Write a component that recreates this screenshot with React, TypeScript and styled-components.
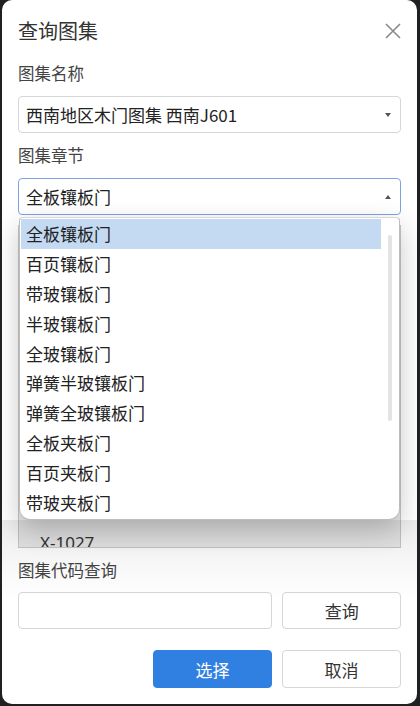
import { createGlobalStyle, styled } from "styled-components";

const GlobalStyle = createGlobalStyle`
	html, body {
		margin: 0;
		padding: 0;
		background: #1f2022;
	}
	body {
		font-family: "Noto Sans CJK SC", "Microsoft YaHei", "Noto Sans", sans-serif;
		color: #333;
	}
`;

const Dialog = styled.div`
	position: relative;
	box-sizing: border-box;
	width: 415px;
	height: 704px;
	margin-left: 2px;
	background: #fff;
	border-radius: 10px;
	padding: 0 16px;
	display: flex;
	flex-direction: column;
	overflow: hidden;
`;

const Header = styled.div`
	display: flex;
	align-items: center;
	justify-content: space-between;
	height: 30px;
	margin-top: 16px;
`;

const Title = styled.div`
	font-size: 20px;
	line-height: 30px;
	color: #333;
`;

const CloseButton = styled.button`
	border: none;
	background: none;
	padding: 0;
	margin-right: -4px;
	width: 24px;
	height: 24px;
	display: flex;
	align-items: center;
	justify-content: center;
`;

const Label = styled.div<{ $top: number }>`
	font-size: 16.5px;
	color: #444;
	line-height: 20px;
	margin-top: ${(p) => p.$top}px;
`;

const SelectWrap = styled.div`
	position: relative;
	margin-top: 13px;
`;

const SelectBox = styled.div<{ $open?: boolean }>`
	box-sizing: border-box;
	height: 37px;
	border: 1px solid ${(p) => (p.$open ? "#7da2e6" : "#d6d6d6")};
	border-radius: 4px;
	display: flex;
	align-items: center;
	justify-content: space-between;
	padding: 0 9px 0 7px;
	font-size: 17px;
	color: #222;
`;

const Caret = styled.span<{ $up?: boolean }>`
	width: 0;
	height: 0;
	border-left: 3.5px solid transparent;
	border-right: 3.5px solid transparent;
	${(p) =>
		p.$up ? "border-bottom: 4px solid #555;" : "border-top: 4px solid #555;"}
`;

const Menu = styled.div`
	position: absolute;
	z-index: 2;
	left: 1px;
	right: 1px;
	top: 39px;
	height: 303px;
	box-sizing: border-box;
	background: #fff;
	border: 1px solid #bdbdbd;
	border-top-color: #d8d8d8;
	border-radius: 4px 4px 11px 11px;
	box-shadow: 0 10px 28px rgba(0, 0, 0, 0.22);
	padding: 1px 0 0 1px;
	display: flex;
`;

const MenuList = styled.div`
	flex: 1;
	display: flex;
	flex-direction: column;
`;

const MenuItem = styled.div<{ $active?: boolean }>`
	height: 29.8px;
	display: flex;
	align-items: center;
	padding-left: 5px;
	font-size: 17px;
	color: #222;
	background: ${(p) => (p.$active ? "#c4daf2" : "transparent")};
`;

const ScrollTrack = styled.div`
	width: 18px;
	display: flex;
	justify-content: center;
	padding-top: 16px;
`;

const ScrollThumb = styled.div`
	width: 4px;
	height: 186px;
	border-radius: 2px;
	background: #e3e3e3;
`;

const ListBox = styled.div`
	box-sizing: border-box;
	height: 323px;
	margin-top: 10px;
	border: 1px solid #c8c8c8;
	background: #e9e9e9;
	display: flex;
	flex-direction: column;
	justify-content: flex-end;
	overflow: hidden;
	padding-left: 21px;
`;

const ListItem = styled.div`
	font-family: "Noto Sans", "Noto Sans CJK SC", sans-serif;
	font-size: 17px;
	color: #333;
	line-height: 20px;
	margin-bottom: -6px;
`;

const Row = styled.div<{ $top: number; $end?: boolean }>`
	display: flex;
	gap: 10px;
	margin-top: ${(p) => p.$top}px;
	justify-content: ${(p) => (p.$end ? "flex-end" : "flex-start")};
`;

const Input = styled.input`
	box-sizing: border-box;
	width: 255px;
	height: 37px;
	border: 1px solid #d6d6d6;
	border-radius: 4px;
	background: transparent;
	outline: none;
`;

const Button = styled.button<{ $primary?: boolean; $h?: number }>`
	box-sizing: border-box;
	width: 119px;
	height: ${(p) => p.$h ?? 38}px;
	border-radius: 4px;
	font-family: inherit;
	font-size: 17px;
	border: 1px solid ${(p) => (p.$primary ? "#2f80e0" : "#d6d6d6")};
	background: ${(p) => (p.$primary ? "#2f80e0" : "#fff")};
	color: ${(p) => (p.$primary ? "#fff" : "#333")};
`;

const Fade = styled.div`
	position: absolute;
	left: 0;
	right: 0;
	top: 520px;
	height: 80px;
	background: linear-gradient(rgba(0, 0, 0, 0.07), rgba(0, 0, 0, 0));
	pointer-events: none;
`;

const chapters = [
	"全板镶板门",
	"百页镶板门",
	"带玻镶板门",
	"半玻镶板门",
	"全玻镶板门",
	"弹簧半玻镶板门",
	"弹簧全玻镶板门",
	"全板夹板门",
	"百页夹板门",
	"带玻夹板门",
];

export default function App() {
	return (
		<>
			<GlobalStyle />
			<Dialog>
				<Header>
					<Title>查询图集</Title>
					<CloseButton>
						<svg width="18" height="18" viewBox="0 0 18 18">
							<path d="M2 2 L16 16 M16 2 L2 16" stroke="#8a8a8a" strokeWidth="1.6" />
						</svg>
					</CloseButton>
				</Header>

				<Label $top={17}>图集名称</Label>
				<SelectWrap>
					<SelectBox>
						<span>西南地区木门图集 西南J601</span>
						<Caret />
					</SelectBox>
				</SelectWrap>

				<Label $top={12}>图集章节</Label>
				<SelectWrap>
					<SelectBox $open>
						<span>全板镶板门</span>
						<Caret $up />
					</SelectBox>
					<Menu>
						<MenuList>
							{chapters.map((c, i) => (
								<MenuItem key={c} $active={i === 0}>
									{c}
								</MenuItem>
							))}
						</MenuList>
						<ScrollTrack>
							<ScrollThumb />
						</ScrollTrack>
					</Menu>
				</SelectWrap>

				<ListBox>
					<ListItem>X-1027</ListItem>
				</ListBox>

				<Label $top={12}>图集代码查询</Label>
				<Row $top={12}>
					<Input />
					<Button $h={37}>查询</Button>
				</Row>
				<Row $top={21} $end>
					<Button $primary>选择</Button>
					<Button>取消</Button>
				</Row>
				<Fade />
			</Dialog>
		</>
	);
}
